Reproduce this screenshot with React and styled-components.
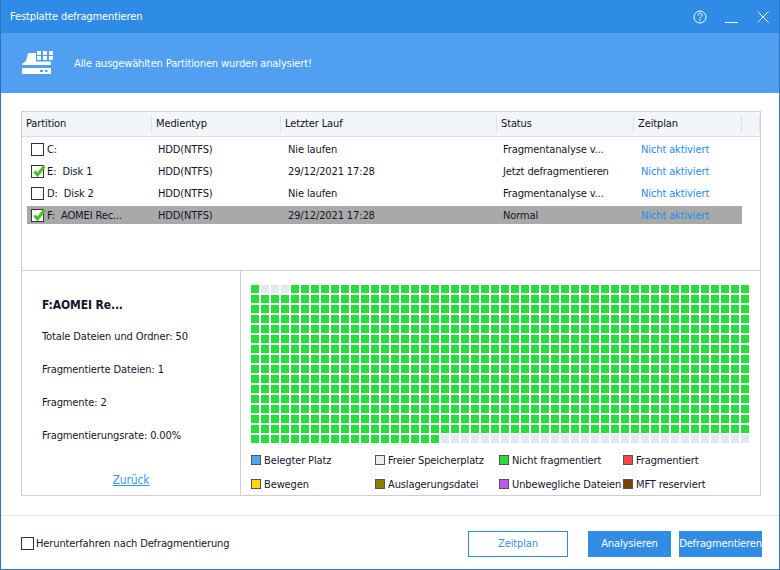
import React from "react";
import styled, { createGlobalStyle } from "styled-components";

const GlobalStyle = createGlobalStyle`
  html, body { margin: 0; padding: 0; background: #fff; }
  body { font-family: "DejaVu Sans Condensed", "DejaVu Sans", sans-serif; font-stretch: condensed; font-size: 11px; letter-spacing: -0.12px; color: #14142a; }
`;

const Window = styled.div`
  width: 780px;
  height: 570px;
  box-sizing: border-box;
  border: 1px solid #2a75c4;
  border-top: 0;
  display: flex;
  flex-direction: column;
  background: #fff;
  overflow: hidden;
`;

const TitleBar = styled.header`
  height: 33px;
  flex: none;
  background: #2f8ce6;
  color: #fff;
  display: flex;
  align-items: center;
  padding: 0 9px;
`;
const TitleText = styled.div`
  flex: 1;
`;
const WinButtons = styled.div`
  display: flex;
  align-items: center;
  gap: 18px;
  padding-right: 1px;
`;
const Banner = styled.div`
  height: 60px;
  flex: none;
  background: #519ff0;
  color: #fff;
  display: flex;
  align-items: center;
  padding-left: 21px;
  gap: 20px;
`;

const Content = styled.main`
  flex: none;
  padding: 18px 18px 0 20px;
  display: flex;
  flex-direction: column;
`;
const Panel = styled.section`
  height: 385px;
  box-sizing: border-box;
  border: 1px solid #cfcfcf;
  display: flex;
  flex-direction: column;
`;
const ListArea = styled.div`
  height: 158px;
  flex: none;
  border-bottom: 1px solid #cfcfcf;
`;
const Head = styled.div`
  height: 24px;
  display: grid;
  grid-template-columns: 130px 129px 216px 137px 108px 1fr;
  align-items: center;
  background: #f2f5fa;
  border-bottom: 1px solid #d9dde3;
`;
const HeadCell = styled.div`
  height: 18px;
  line-height: 18px;
  padding-left: 4px;
  border-right: 1px solid #dfe3ea;
  color: #111;
`;
const Rows = styled.div`
  padding: 3px 18px 0 5px;
  display: flex;
  flex-direction: column;
  gap: 4px;
`;
const Row = styled.div`
  height: 18px;
  display: grid;
  grid-template-columns: 126px 130px 215px 138px 1fr;
  align-items: center;
  background: ${p => (p.$selected ? "#a9a9a9" : "transparent")};
`;
const Cell = styled.div`
  padding-left: 5px;
  white-space: nowrap;
  overflow: hidden;
`;
const NameCell = styled(Cell)`
  display: flex;
  align-items: center;
  gap: 3px;
  padding-left: 4px;
`;
const PartitionName = styled.span`
  white-space: pre;
`;
const LinkCell = styled(Cell)`
  color: #1e8cf0;
`;
const Box = styled.span`
  width: 11px;
  height: 11px;
  flex: none;
  border: 1px solid #333;
  background: #fff;
  position: relative;
  display: inline-block;
`;
const Tick = styled.svg`
  position: absolute;
  left: 0;
  top: -2px;
`;

const Lower = styled.div`
  flex: 1;
  display: flex;
`;
const Details = styled.div`
  width: 219px;
  flex: none;
  box-sizing: border-box;
  border-right: 1px solid #cfcfcf;
  padding: 26px 0 0 20px;
  display: flex;
  flex-direction: column;
`;
const DetailTitle = styled.div`
  font-weight: 700;
  font-size: 12px;
  line-height: 17px;
  margin-bottom: 14px;
`;
const DetailLine = styled.div`
  line-height: 17px;
  margin-bottom: 16px;
`;
const BackLink = styled.a`
  margin-top: 13px;
  align-self: center;
  padding-right: 20px;
  color: #3a97ee;
  font-size: 12px;
  text-decoration: underline;
`;
const MapArea = styled.div`
  flex: 1;
  padding: 14px 0 0 10px;
`;
const Grid = styled.div`
  display: grid;
  grid-template-columns: repeat(50, 8px);
  grid-auto-rows: 8px;
  gap: 2px;
`;
const Block = styled.div`
  background: ${p => (p.$free ? "#dfe8f3" : "#27dc3c")};
`;
const Legend = styled.div`
  margin-top: 5px;
  display: grid;
  grid-template-columns: 124px 124px 124px 1fr;
  grid-auto-rows: 24px;
  align-items: center;
`;
const LegendItem = styled.div`
  display: flex;
  align-items: center;
  gap: 3px;
  white-space: nowrap;
`;
const Swatch = styled.span`
  width: 8px;
  height: 8px;
  flex: none;
  border: 1px solid #555;
  background: ${p => p.$color};
`;

const Footer = styled.footer`
  height: 54px;
  margin-top: 19px;
  box-sizing: border-box;
  flex: none;
  border-top: 1px solid #e4e6ee;
  display: flex;
  align-items: center;
  padding: 2px 17px 0 20px;
`;
const Shutdown = styled.label`
  flex: 1;
  display: flex;
  align-items: center;
  gap: 2px;
`;
const Button = styled.button`
  width: 83px;
  height: 26px;
  padding: 0;
  margin-left: ${p => p.$gap || 20}px;
  box-sizing: border-box;
  font: inherit;
  letter-spacing: inherit;
  background: #318de4;
  color: #fff;
  border: 0;
  white-space: nowrap;
`;
const OutlineButton = styled(Button)`
  width: 100px;
  background: #fff;
  color: #3a8fe6;
  border: 1px solid #2f8ce6;
`;

const DiskIcon = () => (
  <svg width="32" height="28" viewBox="0 0 32 28" fill="#fff">
    <path d="M6 4h8v8.500h15V16H0v-1.500c2-.5 4-2 4.500-4z" />
    <rect x="15" y="2" width="4" height="4" />
    <rect x="21" y="2" width="4" height="4" />
    <rect x="27" y="2" width="4" height="4" />
    <rect x="15" y="7" width="4" height="4" />
    <rect x="21" y="7" width="4" height="4" />
    <rect x="27" y="7" width="4" height="4" />
    <path d="M0 19h29v6H0zM18 21v2h3v-2zM23 21v2h2.500v-2z" fillRule="evenodd" />
  </svg>
);

const partitions = [
  { name: "C:", date: "Nie laufen", status: "Fragmentanalyse v...", checked: false },
  { name: "E:  Disk 1", date: "29/12/2021 17:28", status: "Jetzt defragmentieren", checked: true },
  { name: "D:  Disk 2", date: "Nie laufen", status: "Fragmentanalyse v...", checked: false },
  { name: "F:  AOMEI Rec...", date: "29/12/2021 17:28", status: "Normal", checked: true, selected: true },
];

const legend = [
  ["Belegter Platz", "#4da6f5"],
  ["Freier Speicherplatz", "#e6edf5"],
  ["Nicht fragmentiert", "#27dc3c"],
  ["Fragmentiert", "#f44"],
  ["Bewegen", "#ffd80a"],
  ["Auslagerungsdatei", "#8f7f00"],
  ["Unbewegliche Dateien", "#c455f5"],
  ["MFT reserviert", "#7a4300"],
];

const blocks = Array.from({ length: 800 }, (_, i) => (i >= 1 && i <= 3) || i >= 769);

export default function App() {
  return (
    <Window>
      <GlobalStyle />
      <TitleBar>
        <TitleText>Festplatte defragmentieren</TitleText>
        <WinButtons>
          <svg width="14" height="14" viewBox="0 0 14 14" fill="none" stroke="#fff">
            <circle cx="7" cy="7" r="6" />
            <path d="M5 5.500c0-3 4-3 4-.5 0 1.500-2 1.500-2 3.500M7 9.500v1.500" />
          </svg>
          <svg width="14" height="14" viewBox="0 0 14 14" stroke="#fff">
            <path d="M0 12.500h13" />
          </svg>
          <svg width="12" height="12" viewBox="0 0 12 12" stroke="#fff">
            <path d="M.5.500l11 11M11.500.500l-11 11" />
          </svg>
        </WinButtons>
      </TitleBar>
      <Banner>
        <DiskIcon />
        <span>Alle ausgewählten Partitionen wurden analysiert!</span>
      </Banner>
      <Content>
        <Panel>
          <ListArea>
            <Head>
              {["Partition", "Medientyp", "Letzter Lauf", "Status", "Zeitplan", ""].map(h => (
                <HeadCell key={h}>{h}</HeadCell>
              ))}
            </Head>
            <Rows>
              {partitions.map(p => (
                <Row key={p.name} $selected={p.selected}>
                  <NameCell>
                    <Box>
                      {p.checked && (
                        <Tick width="14" height="14" viewBox="0 0 14 14" fill="none" stroke="#46c31e" strokeWidth="3">
                          <path d="M2.500 7.500l3 3.500 7-9" />
                        </Tick>
                      )}
                    </Box>
                    <PartitionName>{p.name}</PartitionName>
                  </NameCell>
                  <Cell>HDD(NTFS)</Cell>
                  <Cell>{p.date}</Cell>
                  <Cell>{p.status}</Cell>
                  <LinkCell>Nicht aktiviert</LinkCell>
                </Row>
              ))}
            </Rows>
          </ListArea>
          <Lower>
            <Details>
              <DetailTitle>F:AOMEI Re...</DetailTitle>
              <DetailLine>Totale Dateien und Ordner: 50</DetailLine>
              <DetailLine>Fragmentierte Dateien: 1</DetailLine>
              <DetailLine>Fragmente: 2</DetailLine>
              <DetailLine>Fragmentierungsrate: 0.00%</DetailLine>
              <BackLink>Zurück</BackLink>
            </Details>
            <MapArea>
              <Grid>
                {blocks.map((free, i) => (
                  <Block key={i} $free={free} />
                ))}
              </Grid>
              <Legend>
                {legend.map(([label, color]) => (
                  <LegendItem key={label}>
                    <Swatch $color={color} />
                    {label}
                  </LegendItem>
                ))}
              </Legend>
            </MapArea>
          </Lower>
        </Panel>
      </Content>
      <Footer>
        <Shutdown>
          <Box />
          Herunterfahren nach Defragmentierung
        </Shutdown>
        <OutlineButton>Zeitplan</OutlineButton>
        <Button>Analysieren</Button>
        <Button $gap={8}>Defragmentieren</Button>
      </Footer>
    </Window>
  );
}
